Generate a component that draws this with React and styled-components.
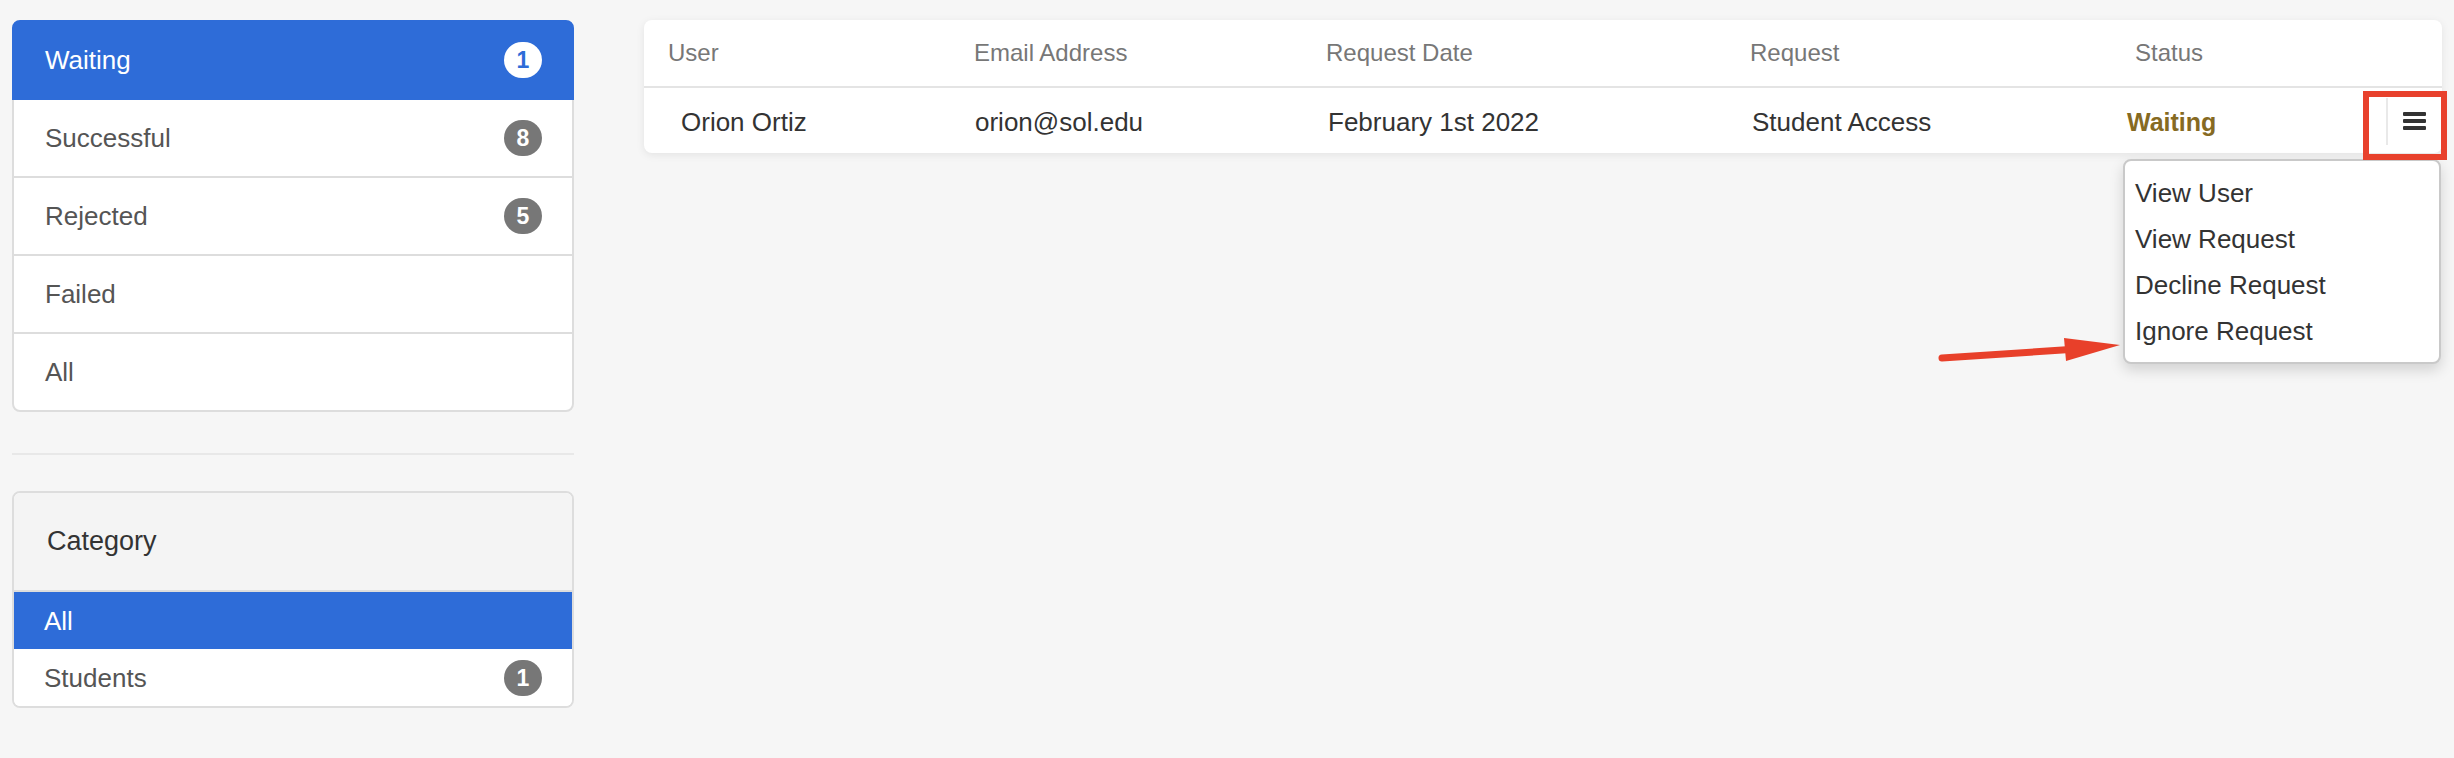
import React from "react";
import styled, { createGlobalStyle } from "styled-components";

const Global = createGlobalStyle`
  html, body { margin: 0; padding: 0; background: #f6f6f6; }
  body { font-family: "Liberation Sans", Arial, sans-serif; min-height: 758px; }
  * { box-sizing: border-box; }
`;

const BLUE = "#2e6cd8";

const Page = styled.div`
  position: relative;
  display: flex;
  align-items: flex-start;
  gap: 70px;
  padding: 20px 12px;
  min-height: 758px;
`;

const Sidebar = styled.div`
  width: 562px;
  flex: none;
  display: flex;
  flex-direction: column;
`;

const ListCard = styled.div`
  display: flex;
  flex-direction: column;
`;

const ListItem = styled.div`
  position: relative;
  display: flex;
  align-items: center;
  justify-content: space-between;
  padding: 20px 30px 20px 31px;
  margin-bottom: -2px;
  border: 2px solid ${(p) => (p.$active ? BLUE : "#dddddd")};
  background: ${(p) => (p.$active ? BLUE : "#ffffff")};
  color: ${(p) => (p.$active ? "#ffffff" : "#555555")};
  font-size: 26px;
  line-height: 36px;
  z-index: ${(p) => (p.$active ? 2 : 1)};
  &:first-child { border-radius: 8px 8px 0 0; }
  &:last-child { border-radius: 0 0 8px 8px; margin-bottom: 0; }
`;

const Badge = styled.span`
  display: inline-flex;
  align-items: center;
  justify-content: center;
  height: 36px;
  min-width: 38px;
  padding: 0 12px;
  border-radius: 18px;
  font-size: 23px;
  font-weight: 700;
  background: ${(p) => (p.$light ? "#ffffff" : "#777777")};
  color: ${(p) => (p.$light ? BLUE : "#ffffff")};
`;

const Divider = styled.hr`
  margin: 41px 0 36px;
  border: 0;
  height: 2px;
  background: #e8e8e8;
`;

const CategoryCard = styled.div`
  border: 2px solid #dddddd;
  border-radius: 8px;
  overflow: hidden;
  background: #ffffff;
`;

const CategoryHeader = styled.div`
  background: #f4f4f4;
  border-bottom: 2px solid #dddddd;
  padding: 30px 31px 30px 33px;
  font-size: 27px;
  line-height: 37px;
  color: #333333;
`;

const CategoryItem = styled.div`
  display: flex;
  align-items: center;
  justify-content: space-between;
  padding: 11px 30px 10px;
  font-size: 26px;
  line-height: 36px;
  background: ${(p) => (p.$active ? BLUE : "#ffffff")};
  color: ${(p) => (p.$active ? "#ffffff" : "#555555")};
`;

const TableWrap = styled.div`
  position: relative;
  width: 1798px;
  flex: none;
`;

const TableCard = styled.div`
  display: grid;
  grid-template-columns: 306px 352px 424px 385px 1fr 56px;
  background: #ffffff;
  border-radius: 8px;
  box-shadow: 0 2px 8px rgba(0, 0, 0, 0.08);
`;

const HeadCell = styled.div`
  display: flex;
  align-items: center;
  height: 68px;
  padding-left: 24px;
  border-bottom: 2px solid #e4e4e4;
  font-size: 24px;
  color: #777777;
`;

const Cell = styled.div`
  display: flex;
  align-items: center;
  height: 65px;
  padding-top: 4px;
  padding-left: ${(p) => p.$pad ?? 25}px;
  font-size: ${(p) => (p.$status ? 25 : 26)}px;
  font-weight: ${(p) => (p.$status ? 700 : 400)};
  color: ${(p) => (p.$status ? "#866a22" : "#333333")};
  white-space: nowrap;
`;

const ActionCell = styled.div`
  position: relative;
  display: flex;
  align-items: center;
  justify-content: center;
  height: 65px;
  &::before {
    content: "";
    position: absolute;
    left: 0;
    top: 10px;
    bottom: 8px;
    width: 2px;
    background: #e9e9e9;
  }
`;

const Highlight = styled.div`
  position: absolute;
  left: -23px;
  right: -5px;
  top: 3px;
  bottom: -7px;
  border: 6px solid #e8412c;
  pointer-events: none;
  z-index: 5;
`;

const MenuButton = styled.button`
  display: flex;
  align-items: center;
  justify-content: center;
  padding: 0;
  border: 0;
  background: transparent;
  color: #333333;
  cursor: pointer;
`;

const Menu = styled.div`
  position: absolute;
  top: calc(100% + 6px);
  right: 1px;
  width: 318px;
  background: #ffffff;
  border: 2px solid #c9c9c9;
  border-radius: 8px;
  box-shadow: 0 6px 14px rgba(0, 0, 0, 0.15);
  padding: 9px 10px 8px;
  z-index: 4;
`;

const MenuItem = styled.div`
  font-size: 26px;
  line-height: 46px;
  color: #333333;
  white-space: nowrap;
`;

const ArrowSvg = styled.svg`
  position: absolute;
  left: 1930px;
  top: 330px;
  overflow: visible;
  pointer-events: none;
`;

const statusItems = [
  { label: "Waiting", count: 1, active: true },
  { label: "Successful", count: 8 },
  { label: "Rejected", count: 5 },
  { label: "Failed" },
  { label: "All" },
];

const headers = ["User", "Email Address", "Request Date", "Request", "Status"];

export default function App() {
  return (
    <>
      <Global />
      <Page>
        <Sidebar>
          <ListCard>
            {statusItems.map((it) => (
              <ListItem key={it.label} $active={it.active}>
                <span>{it.label}</span>
                {it.count != null && <Badge $light={it.active}>{it.count}</Badge>}
              </ListItem>
            ))}
          </ListCard>
          <Divider />
          <CategoryCard>
            <CategoryHeader>Category</CategoryHeader>
            <CategoryItem $active>All</CategoryItem>
            <CategoryItem>
              <span>Students</span>
              <Badge>1</Badge>
            </CategoryItem>
          </CategoryCard>
        </Sidebar>

        <TableWrap>
          <TableCard>
            {headers.map((h) => (
              <HeadCell key={h}>{h}</HeadCell>
            ))}
            <HeadCell />
            <Cell $pad={37}>Orion Ortiz</Cell>
            <Cell>orion@sol.edu</Cell>
            <Cell $pad={26}>February 1st 2022</Cell>
            <Cell $pad={26}>Student Access</Cell>
            <Cell $pad={16} $status>Waiting</Cell>
            <ActionCell>
              <MenuButton aria-label="Actions">
                <svg width="23" height="18" viewBox="0 0 23 18">
                  <rect x="0" y="0" width="23" height="4" rx="1" fill="#333" />
                  <rect x="0" y="7" width="23" height="4" rx="1" fill="#333" />
                  <rect x="0" y="14" width="23" height="4" rx="1" fill="#333" />
                </svg>
              </MenuButton>
              <Highlight />
            </ActionCell>
          </TableCard>
          <Menu>
            <MenuItem>View User</MenuItem>
            <MenuItem>View Request</MenuItem>
            <MenuItem>Decline Request</MenuItem>
            <MenuItem>Ignore Request</MenuItem>
          </Menu>
        </TableWrap>

        <ArrowSvg width="200" height="40" viewBox="0 0 200 40">
          <line x1="12" y1="28" x2="140" y2="19.5" stroke="#e8402a" strokeWidth="7" strokeLinecap="round" />
          <polygon points="134,8 190,15 136,31" fill="#e8402a" />
        </ArrowSvg>
      </Page>
    </>
  );
}
